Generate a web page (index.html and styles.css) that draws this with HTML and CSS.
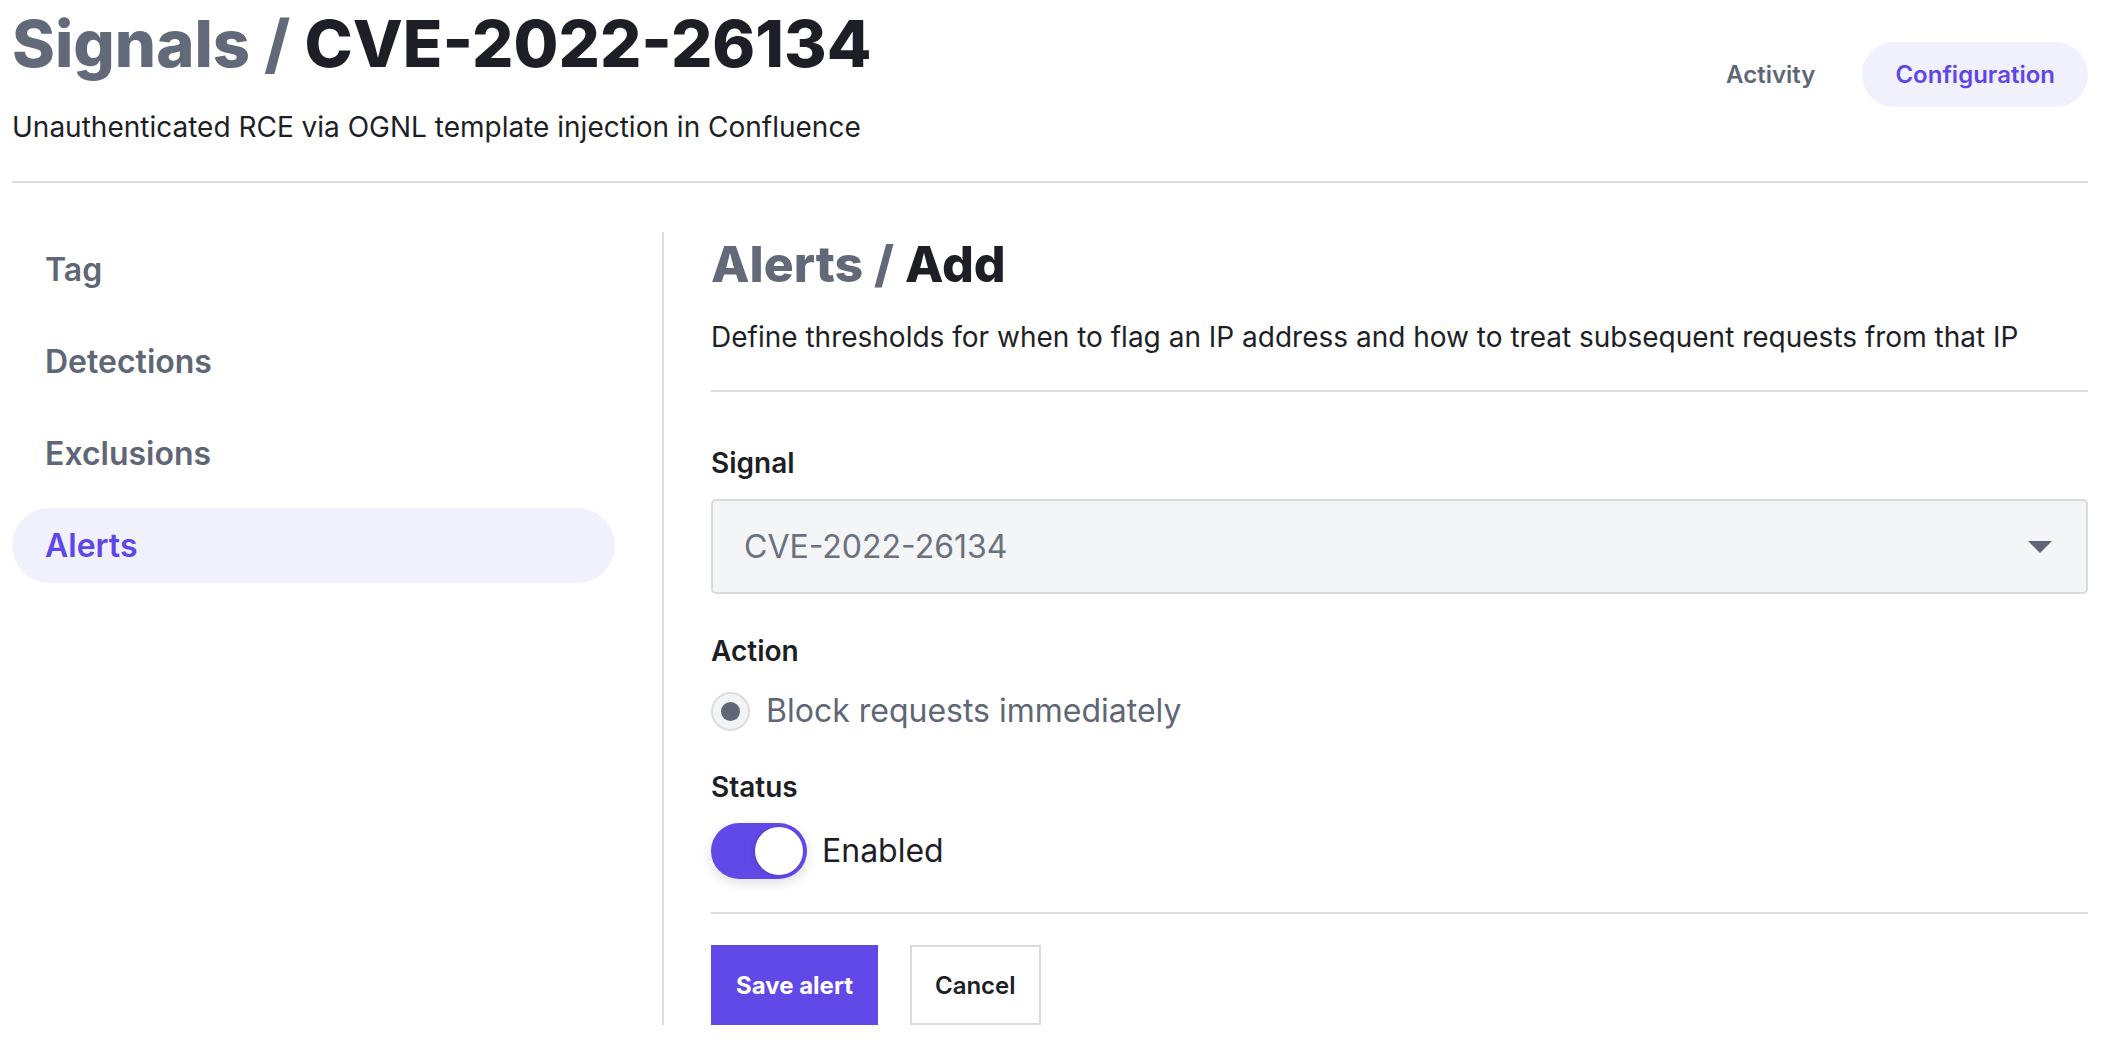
FILE: index.html
```html
<!DOCTYPE html>
<html lang="en">
<head>
<meta charset="utf-8">
<title>Signals / CVE-2022-26134</title>
<link rel="stylesheet" href="styles.css">
</head>
<body>
<div class="page">
  <header class="header">
    <div class="header-text">
      <h1 class="title"><span class="crumb">Signals /</span> CVE-2022-26134</h1>
      <p class="subtitle">Unauthenticated RCE via OGNL template injection in Confluence</p>
    </div>
    <nav class="tabs">
      <a class="tab">Activity</a>
      <a class="tab tab-active">Configuration</a>
    </nav>
  </header>
  <main class="main">
    <aside class="sidebar">
      <a class="side-item">Tag</a>
      <a class="side-item">Detections</a>
      <a class="side-item">Exclusions</a>
      <a class="side-item side-active">Alerts</a>
    </aside>
    <section class="content">
      <div class="content-head">
        <h2 class="heading"><span class="crumb">Alerts /</span> Add</h2>
        <p class="desc">Define thresholds for when to flag an IP address and how to treat subsequent requests from that IP</p>
      </div>
      <div class="form">
        <div class="label">Signal</div>
        <div class="select">
          <span class="select-value">CVE-2022-26134</span>
          <span class="caret"></span>
        </div>
        <div class="label label-action">Action</div>
        <div class="radio-row">
          <span class="radio"><span class="radio-dot"></span></span>
          <span class="radio-text">Block requests immediately</span>
        </div>
        <div class="label label-status">Status</div>
        <div class="toggle-row">
          <span class="toggle"><span class="knob"></span></span>
          <span class="toggle-text">Enabled</span>
        </div>
      </div>
      <div class="actions">
        <button class="btn btn-primary">Save alert</button>
        <button class="btn btn-secondary">Cancel</button>
      </div>
    </section>
  </main>
</div>
</body>
</html>
```
FILE: styles.css
```css
* { box-sizing: border-box; }
html, body { margin: 0; padding: 0; background: #ffffff; }
body {
  font-family: Inter, "Noto Sans", "Liberation Sans", sans-serif;
  color: #1e1f26;
}
.page {
  padding: 12px 22px 0 12px;
}
.header {
  display: flex;
  justify-content: space-between;
  align-items: flex-start;
  padding-bottom: 34px;
  border-bottom: 2px solid #dadadf;
}
.title {
  margin: 0;
  font-size: 65px;
  line-height: 64px;
  font-weight: 800;
  color: #1e1f26;
}
.crumb { color: #626978; }
.subtitle {
  margin: 31px 0 0 0;
  font-size: 28px;
  line-height: 40px;
  color: #1e1f26;
}
.tabs {
  display: flex;
  gap: 14px;
  margin-top: 30px;
}
.tab {
  display: block;
  height: 65px;
  line-height: 65px;
  padding: 0 33px;
  border-radius: 33px;
  font-size: 24px;
  font-weight: 600;
  color: #5f6675;
}
.tab-active {
  background: #f1f0fd;
  color: #5f46e6;
}
.main {
  display: flex;
  align-items: flex-start;
  gap: 47px;
  padding-top: 49px;
}
.sidebar {
  width: 603px;
  flex: none;
  display: flex;
  flex-direction: column;
  gap: 17px;
}
.side-item {
  display: block;
  height: 75px;
  line-height: 75px;
  padding-left: 33px;
  border-radius: 38px;
  font-size: 32px;
  font-weight: 600;
  color: #5f6675;
}
.side-active {
  background: #f1f0fd;
  color: #5f46e6;
}
.content {
  flex: 1;
  border-left: 2px solid #dadadf;
  padding-left: 47px;
}
.content-head {
  padding-bottom: 33px;
  border-bottom: 2px solid #dadadf;
}
.heading {
  margin: 0;
  font-size: 50px;
  line-height: 64px;
  font-weight: 800;
  color: #1e1f26;
}
.desc {
  margin: 21px 0 0 0;
  font-size: 28px;
  line-height: 40px;
  color: #1e1f26;
}
.form {
  padding-top: 51px;
  padding-bottom: 33px;
  border-bottom: 2px solid #dadadf;
}
.label {
  font-size: 28px;
  line-height: 40px;
  font-weight: 600;
  color: #1e1f26;
}
.select {
  margin-top: 16px;
  height: 95px;
  display: flex;
  align-items: center;
  justify-content: space-between;
  padding: 0 34px 0 31px;
  background: #f4f5f7;
  border: 2px solid #d9dade;
  border-radius: 5px;
}
.select-value {
  font-size: 32px;
  color: #6b717e;
}
.caret {
  width: 0;
  height: 0;
  border-left: 12px solid transparent;
  border-right: 12px solid transparent;
  border-top: 12px solid #5f6675;
}
.label-action { margin-top: 37px; }
.radio-row {
  margin-top: 20px;
  display: flex;
  align-items: center;
  gap: 16px;
}
.radio {
  width: 39px;
  height: 39px;
  border-radius: 50%;
  background: #f3f4f6;
  border: 2px solid #dcdde3;
  display: flex;
  align-items: center;
  justify-content: center;
}
.radio-dot {
  width: 19px;
  height: 19px;
  border-radius: 50%;
  background: #5f6675;
}
.radio-text {
  font-size: 32px;
  line-height: 40px;
  color: #5f6675;
}
.label-status { margin-top: 36px; }
.toggle-row {
  margin-top: 16px;
  display: flex;
  align-items: center;
  gap: 15px;
}
.toggle {
  width: 96px;
  height: 56px;
  border-radius: 28px;
  background: #6149e8;
  display: flex;
  align-items: center;
  justify-content: flex-end;
  padding-right: 4px;
  box-shadow: 0 4px 12px rgba(30, 31, 38, 0.14);
}
.knob {
  width: 48px;
  height: 48px;
  border-radius: 50%;
  background: #ffffff;
  box-shadow: -2px 1px 4px rgba(30, 31, 38, 0.18);
}
.toggle-text {
  font-size: 32px;
  line-height: 40px;
  color: #1e1f26;
}
.actions {
  display: flex;
  gap: 32px;
  padding-top: 31px;
}
.btn {
  height: 80px;
  padding: 0 23px;
  font-family: Inter, "Noto Sans", "Liberation Sans", sans-serif;
  font-size: 24px;
  font-weight: 700;
  border-radius: 0;
  cursor: pointer;
}
.btn-primary {
  background: #6149e8;
  color: #ffffff;
  border: 2px solid #6149e8;
}
.btn-secondary {
  background: #ffffff;
  color: #1e1f26;
  border: 2px solid #d9dade;
  padding: 0 23px;
  font-weight: 600;
}
```
